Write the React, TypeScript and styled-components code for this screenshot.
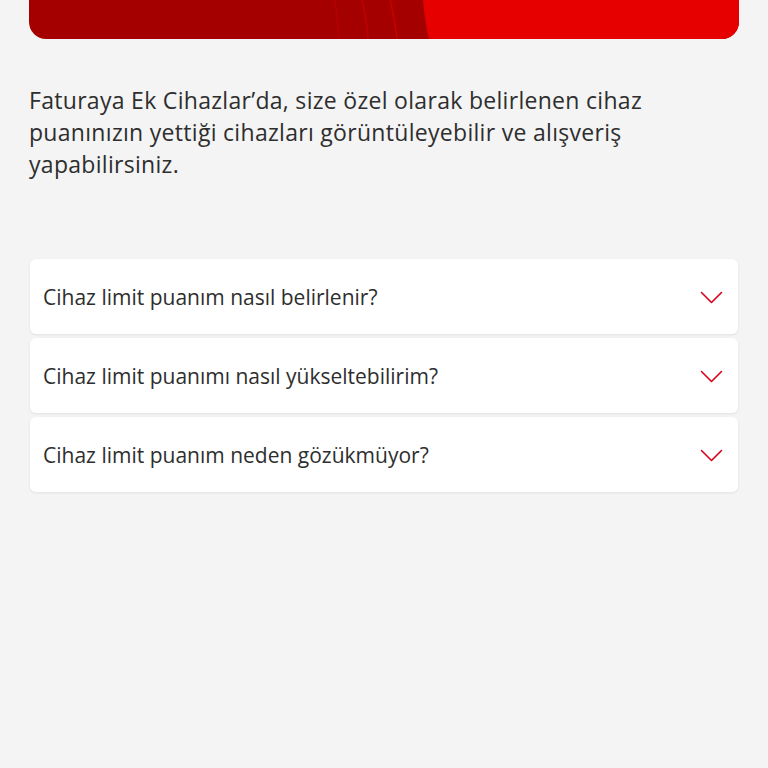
import styled, { createGlobalStyle } from "styled-components";

const GlobalStyle = createGlobalStyle`
    html, body {
        margin: 0;
        padding: 0;
        background: #f4f4f4;
    }
    body {
        font-family: "Open Sans", "Noto Sans", sans-serif;
        color: #333;
    }
`;

const Page = styled.div`
    min-height: 768px;
    padding: 0 29px;
    box-sizing: border-box;
`;

const Banner = styled.div`
    position: relative;
    height: 39px;
    background: #a40000;
    border-radius: 0 0 17px 17px;
    overflow: hidden;
`;

const BannerArt = styled.svg`
    position: absolute;
    inset: 0;
    width: 100%;
    height: 100%;
`;

const Intro = styled.p`
    margin: 45px 0 0;
    max-width: 632px;
    font-size: 23px;
    line-height: 32px;
    color: #2e2e2e;
    letter-spacing: 0.3px;
`;

const List = styled.div`
    display: flex;
    flex-direction: column;
    gap: 4px;
    margin: 79px 1px 0;
`;

const Item = styled.div`
    display: flex;
    align-items: center;
    justify-content: space-between;
    height: 75px;
    padding: 0 15px 0 13px;
    background: #fff;
    border-radius: 6px;
    box-shadow: 0 1px 3px rgba(0, 0, 0, 0.08);
`;

const Question = styled.span`
    font-size: 21px;
    color: #2e2e2e;
`;

const Chevron = () => (
    <svg width="23" height="15" viewBox="0 0 23 15" fill="none">
        <path d="M1.5 3.5L11.5 13.5L21.5 3.5" stroke="#d9001b" strokeWidth="1.6" strokeLinecap="round" strokeLinejoin="round" />
    </svg>
);

const questions = [
    "Cihaz limit puanım nasıl belirlenir?",
    "Cihaz limit puanımı nasıl yükseltebilirim?",
    "Cihaz limit puanım neden gözükmüyor?",
];

export default function App() {
    return (
        <>
            <GlobalStyle />
            <Page>
                <Banner>
                    <BannerArt viewBox="0 0 710 39" preserveAspectRatio="none">
                        <path d="M405 -200 C 388 -80 390 0 400 39 L710 39 L710 -200 Z" fill="#e60000" />
                        <path d="M300 -40 C 306 0 309 20 310 39" stroke="#b80000" strokeWidth="1.5" fill="none" />
                        <path d="M325 -40 C 334 0 338 20 339 39" stroke="#c00000" strokeWidth="1.5" fill="none" />
                        <path d="M352 -40 C 362 0 366 20 368 39" stroke="#c80000" strokeWidth="1.5" fill="none" />
                    </BannerArt>
                </Banner>
                <Intro>
                    Faturaya Ek Cihazlar’da, size özel olarak belirlenen cihaz puanınızın yettiği cihazları görüntüleyebilir ve alışveriş yapabilirsiniz.
                </Intro>
                <List>
                    {questions.map((q, index) => (
                        <Item key={index}>
                            <Question>{q}</Question>
                            <Chevron />
                        </Item>
                    ))}
                </List>
            </Page>
        </>
    );
}
